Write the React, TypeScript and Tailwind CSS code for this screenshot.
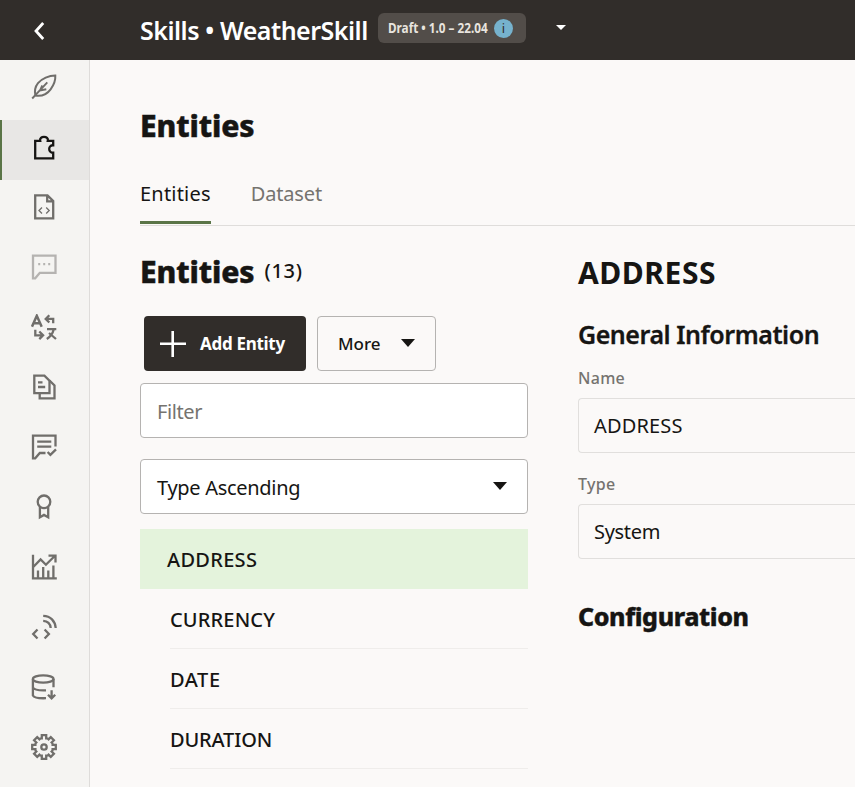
import React from 'react';

function gearPath() {
  const pts: string[] = [];
  for (let i = 0; i < 8; i++) {
    const a = (i * Math.PI) / 4;
    const corners: [number, number][] = [
      [-3.0, -8.6],
      [-2.2, -8.6],
      [-2.2, -11.8],
      [2.2, -11.8],
      [2.2, -8.6],
      [3.0, -8.6],
    ];
    for (const [x, y] of corners) {
      const px = 13 + x * Math.cos(a) - y * Math.sin(a);
      const py = 13 + x * Math.sin(a) + y * Math.cos(a);
      pts.push(px.toFixed(2) + ' ' + py.toFixed(2));
    }
  }
  return 'M' + pts.join('L') + 'Z';
}

type Item = { name: string; tone: string; active?: boolean; art: React.ReactNode };

const items: Item[] = [
  {
    name: 'Skill',
    tone: 'text-[#706e6b]',
    art: (
      <>
        <path strokeWidth="2" d="M24.300 1.600C18 1.600 10.800 4.500 7 9.200C4 13 3.300 17 4.400 21.600C10 22.500 15.800 20.500 19.600 15.300C22.800 11 24.600 6 24.300 1.600Z" />
        <path strokeWidth="1.900" d="M1.200 24.500L16.300 8.300M11.300 11.500L9 16.500L15.300 15.300" />
      </>
    ),
  },
  {
    name: 'Entities',
    tone: 'text-[#161513]',
    active: true,
    art: <path d="M4.200 6.900H9.200C8.600 4.300 10.600 2.900 13 2.900S17.400 4.300 16.800 6.900H22.200V11.300C19.900 11 18.200 12.800 18.200 15S19.900 19 22.200 18.700V24.300H4.200Z" />,
  },
  {
    name: 'Flows',
    tone: 'text-[#706e6b]',
    art: (
      <>
        <path d="M4.200 1.400H16.500L22.200 7V24.400H4.200ZM16.200 1.400V7.300H22.200" />
        <path strokeWidth="1.300" d="M11 13.500L8 16.500L11 19.500M15.200 13.500L18.200 16.500L15.200 19.500" />
      </>
    ),
  },
  {
    name: 'Utterances',
    tone: 'text-[#b5b3b1]',
    art: (
      <>
        <path d="M2 1.600H24.500V18.800H8.800L4.200 24.300H2Z" />
        <path d="M7.200 10.200H9.200M12.200 10.200H14.200M17.200 10.200H19.200" />
      </>
    ),
  },
  {
    name: 'Translate',
    tone: 'text-[#706e6b]',
    art: (
      <>
        <path strokeWidth="2.500" d="M1 12.700L5.800 1.800L10.700 12.700M2.800 9.200H8.900" />
        <path d="M22.200 9.300V4.900H15.500M18.300 1.300L14.700 4.900L18.300 8.500" />
        <path d="M4.300 15.700V21.300H11M8.300 17.500L12.100 21.300L8.300 25.100" />
        <path d="M16 15.200H25.300M22.800 15.200C21.800 19.200 19.200 22.800 15.800 25M18 19L25 25" />
      </>
    ),
  },
  {
    name: 'Documents',
    tone: 'text-[#706e6b]',
    art: (
      <>
        <path d="M3.300 1.600H13.400L18.500 6.700V19.200H3.300Z" />
        <path d="M8.700 19.200V24.300H23.500V11.500L18.500 6.500M7 8.300H11.500M7 13H14.200" />
      </>
    ),
  },
  {
    name: 'Review',
    tone: 'text-[#706e6b]',
    art: (
      <path d="M24.500 12.600V1.600H2V24.300H4.200L8.800 19H14.500M6.200 7.700H20.300M6.200 12.700H20.300M16.600 18L19.400 20.900L25 15.400" />
    ),
  },
  {
    name: 'Quality',
    tone: 'text-[#706e6b]',
    art: (
      <>
        <circle cx="13" cy="7.800" r="6.300" />
        <path d="M8.900 12.800V23.300L13 20.900L17.200 23.300V12.800" />
      </>
    ),
  },
  {
    name: 'Insights',
    tone: 'text-[#706e6b]',
    art: (
      <>
        <path d="M2 .7V24.300H25.800M2 13.300L9.600 5.500L14.900 10.700L24 1.700M17.500 1.700H24.500V8.500" />
        <path d="M7 16.500V24M12.200 13V24M17.300 16.500V24M22.400 11.500V24" />
      </>
    ),
  },
  {
    name: 'Components',
    tone: 'text-[#706e6b]',
    art: (
      <path d="M6.500 15.500L2.200 20L6.500 24.500M13.600 15.500L17.900 20L13.600 24.500M12.200 6.800C16.500 7 19.300 9.800 19.700 14M12.200 1.800C19.500 2 24.200 7 24.700 14" />
    ),
  },
  {
    name: 'Data',
    tone: 'text-[#706e6b]',
    art: (
      <>
        <ellipse cx="12.200" cy="5" rx="10.300" ry="3.700" />
        <path d="M1.900 5V21.500C3 23.500 8 24.500 15 24.200M22.500 5V13.300M1.900 13.500C3 15.500 8 16.600 15 16.300M20.600 16.300V24.200M17 20.700L20.600 24.300L24.200 20.700" />
      </>
    ),
  },
  {
    name: 'Settings',
    tone: 'text-[#706e6b]',
    art: (
      <>
        <path d={gearPath()} />
        <circle cx="13" cy="13" r="2.700" />
      </>
    ),
  },
];

const entities = [
  { name: 'CURRENCY', spacing: 'tracking-[0.15px]' },
  { name: 'DATE', spacing: 'tracking-[0.6px]' },
  { name: 'DURATION', spacing: 'tracking-[-0.15px]' },
];

function Caret({ className }: { className: string }) {
  return (
    <svg className={className} viewBox="0 0 14 8" preserveAspectRatio="none" fill="currentColor">
      <path d="M0 0H14L7 8Z" />
    </svg>
  );
}

function Field({ label, value, spacing }: { label: string; value: string; spacing: string }) {
  return (
    <div>
      <div className="h-5 text-base leading-5 font-medium tracking-[0.3px] text-[#75736f]">{label}</div>
      <div className={'mt-[10px] flex h-[55px] items-center rounded-l border border-r-0 border-[#e1dfdd] pl-[15px] text-xl ' + spacing}>
        {value}
      </div>
    </div>
  );
}

export default function App() {
  return (
    <div className="flex h-[787px] w-[855px] flex-col overflow-hidden bg-[#fbf9f8] font-['Noto_Sans',sans-serif] text-[#161513]">
      <header className="flex h-[60px] shrink-0 items-center bg-[#312d2a] text-white">
        <svg className="ml-[33px] h-5 w-3" viewBox="0 0 12 20" fill="none" stroke="currentColor" strokeWidth="2.800">
          <path d="M10.200 3L3 11L10.200 19" />
        </svg>
        <h1 className="ml-[95px] w-[238px] text-[25px] leading-[60px] font-semibold tracking-[-0.5px] whitespace-nowrap">
          <span>Skills • WeatherSkill</span>
        </h1>
        <div className="mb-1 flex h-[30px] w-[148px] items-center rounded-md bg-[#524d49] pl-[10px]">
          <div className="w-[106px] shrink-0 text-[13.500px] font-bold whitespace-nowrap text-[#e8e4df]">
            <div className="w-max origin-left scale-x-[0.87]">Draft • 1.0 – 22.04</div>
          </div>
          <div className="flex size-[19px] items-center justify-center rounded-full bg-[#76b2cd] text-[13px] leading-none text-[#312d2a]">
            i
          </div>
        </div>
        <Caret className="mb-[6px] ml-[30px] h-[5px] w-[10px]" />
      </header>

      <div className="flex min-h-0 flex-1">
        <nav className="w-[90px] shrink-0 border-r border-[#dedcda] bg-[#f5f4f2]">
          {items.map((it) => (
            <div
              key={it.name}
              className={
                it.active
                  ? 'h-[60px] border-l-2 border-[#5a7547] bg-[#e8e7e5] pt-[14px] pl-[29px]'
                  : 'h-[60px] pt-[14px] pl-[31px]'
              }
            >
              <svg className={'size-[26px] ' + it.tone} viewBox="0 0 26 26" fill="none" stroke="currentColor" strokeWidth="2.300">
                {it.art}
              </svg>
            </div>
          ))}
        </nav>

        <main className="min-w-0 flex-1 pt-[46px] pl-[50px]">
          <h2 className="h-10 text-[30px] leading-10 font-extrabold tracking-[-0.1px] [-webkit-text-stroke:0.5px]">
            <span>Entities</span>
          </h2>
          <div className="mt-[20px] flex h-[60px] gap-10 border-b border-[#dfdddb] text-xl leading-[55px]">
            <div className="h-[58px] border-b-3 border-[#5a7547] tracking-[0.2px]">Entities</div>
            <div className="tracking-[-0.15px] text-[#75736f]">Dataset</div>
          </div>

          <div className="flex">
            <section className="w-[388px] shrink-0">
              <h2 className="mt-[26px] flex h-10 items-center gap-[10px] text-[30px] leading-10 font-extrabold tracking-[-0.1px]">
                <span className="[-webkit-text-stroke:0.5px]">Entities</span>
                <span className="pb-[3px] text-xl font-medium tracking-[0.7px]">(13)</span>
              </h2>
              <div className="mt-6 flex gap-[11px] pl-1 text-[17px]">
                <button className="flex h-[55px] w-[162px] items-center rounded bg-[#312d2a] pl-4 font-bold tracking-[-0.3px] text-white">
                  <svg className="mr-[14px] size-[26px]" viewBox="0 0 26 26" stroke="currentColor" strokeWidth="2.600">
                    <path d="M0 12.700H26M12.700 0V26" />
                  </svg>
                  <span>Add Entity</span>
                </button>
                <button className="flex h-[55px] w-[119px] items-center justify-between rounded border border-[#b5b3b1] pr-5 pl-5 font-medium">
                  <span>More</span>
                  <Caret className="mb-[2px] h-2 w-[14px]" />
                </button>
              </div>
              <div className="mt-3 flex h-[55px] items-center rounded border border-[#b5b3b1] bg-white pt-0.5 pl-4 text-xl tracking-[-0.4px] text-[#75736f]">
                <span>Filter</span>
              </div>
              <div className="mt-[21px] flex h-[55px] items-center justify-between rounded border border-[#b5b3b1] bg-white pt-0.5 pr-5 pl-4 text-xl tracking-[-0.3px]">
                <span>Type Ascending</span>
                <Caret className="mb-1 h-2 w-[14px]" />
              </div>
              <ul className="mt-[15px] text-xl leading-[61px] font-medium">
                <li className="h-[60px] bg-[#e4f3dc] pl-[27px] tracking-[0.3px]">
                  <span>ADDRESS</span>
                </li>
                {entities.map((e) => (
                  <li key={e.name} className={'ml-[30px] h-[60px] border-b border-[#efedeb] ' + e.spacing}>
                    <span>{e.name}</span>
                  </li>
                ))}
              </ul>
            </section>

            <section className="ml-[50px] min-w-0 flex-1">
              <h2 className="mt-[27px] h-10 text-[30px] leading-10 font-bold tracking-[0.55px]">
                <span>ADDRESS</span>
              </h2>
              <h3 className="mt-[25px] mb-[9px] h-8 text-[25px] leading-8 font-semibold tracking-[-0.46px] whitespace-nowrap [-webkit-text-stroke:0.3px]">
                <span>General Information</span>
              </h3>
              <div className="pt-[9px]">
                <Field label="Name" value="ADDRESS" spacing="tracking-[0.15px]" />
              </div>
              <div className="pt-[21px]">
                <Field label="Type" value="System" spacing="tracking-[-0.3px]" />
              </div>
              <h3 className="mt-[41px] h-8 text-[25px] leading-8 font-extrabold tracking-[-0.4px] [-webkit-text-stroke:0.4px]">
                <span>Configuration</span>
              </h3>
            </section>
          </div>
        </main>
      </div>
    </div>
  );
}
